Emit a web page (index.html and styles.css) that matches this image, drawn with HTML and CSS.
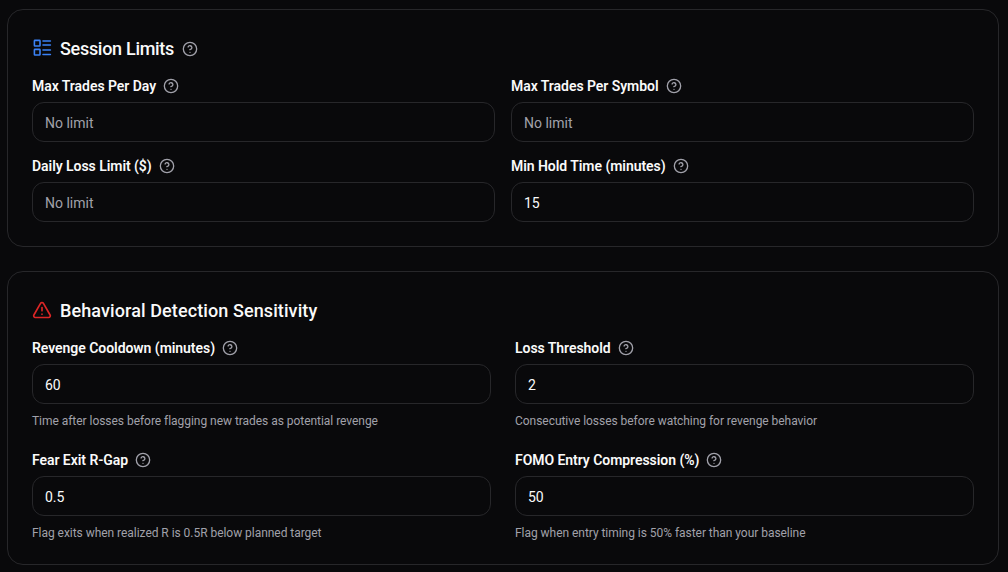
FILE: index.html
```html
<!DOCTYPE html>
<html lang="en">
<head>
  <meta charset="UTF-8" />
  <title>Trading Rules</title>
  <meta name="viewport" content="width=device-width, initial-scale=1.0" />
  <link rel="stylesheet" href="styles.css">
</head>
<body>
  <svg class="icon-defs" width="0" height="0" aria-hidden="true">
    <symbol id="help" viewBox="0 0 24 24">
      <circle cx="12" cy="12" r="10"/>
      <path d="M9.1 9a3 3 0 0 1 5.8 1c0 2-3 3-3 3"/>
      <path d="M12 17h.01"/>
    </symbol>
  </svg>

  <!-- Session limits -->
  <section class="card">
    <h2 class="card-title">
      <svg class="title-icon blue" viewBox="0 0 20 20">
        <rect x="2.4" y="2.4" width="5.6" height="5.6" rx="0.6"/>
        <rect x="2.4" y="11.4" width="5.6" height="5.6" rx="0.6"/>
        <path d="M11 3h7.4M11 7h7.4M11 12h7.4M11 16.5h7.4"/>
      </svg>
      <span>Session Limits</span>
      <svg class="help"><use href="#help"/></svg>
    </h2>
    <div class="grid grid-tight">
      <div class="field">
        <label class="label">Max Trades Per Day <svg class="help"><use href="#help"/></svg></label>
        <input class="input" type="text" placeholder="No limit" />
      </div>
      <div class="field">
        <label class="label">Max Trades Per Symbol <svg class="help"><use href="#help"/></svg></label>
        <input class="input" type="text" placeholder="No limit" />
      </div>
      <div class="field">
        <label class="label">Daily Loss Limit ($) <svg class="help"><use href="#help"/></svg></label>
        <input class="input" type="text" placeholder="No limit" />
      </div>
      <div class="field">
        <label class="label">Min Hold Time (minutes) <svg class="help"><use href="#help"/></svg></label>
        <input class="input" type="text" value="15" />
      </div>
    </div>
  </section>

  <!-- Behavioral detection -->
  <section class="card card-last">
    <h2 class="card-title card-title-long">
      <svg class="title-icon red" viewBox="0 0 24 24">
        <path d="m21.73 18-8-14a2 2 0 0 0-3.48 0l-8 14A2 2 0 0 0 4 21h16a2 2 0 0 0 1.73-3"/>
        <path d="M12 9v4"/>
        <path d="M12 17h.01"/>
      </svg>
      <span>Behavioral Detection Sensitivity</span>
    </h2>
    <div class="grid grid-wide">
      <div class="field">
        <label class="label">Revenge Cooldown (minutes) <svg class="help"><use href="#help"/></svg></label>
        <input class="input" type="text" value="60" />
        <p class="hint">Time after losses before flagging new trades as potential revenge</p>
      </div>
      <div class="field">
        <label class="label">Loss Threshold <svg class="help"><use href="#help"/></svg></label>
        <input class="input" type="text" value="2" />
        <p class="hint">Consecutive losses before watching for revenge behavior</p>
      </div>
      <div class="field">
        <label class="label">Fear Exit R-Gap <svg class="help"><use href="#help"/></svg></label>
        <input class="input" type="text" value="0.5" />
        <p class="hint">Flag exits when realized R is 0.5R below planned target</p>
      </div>
      <div class="field">
        <label class="label">FOMO Entry Compression (%) <svg class="help"><use href="#help"/></svg></label>
        <input class="input" type="text" value="50" />
        <p class="hint">Flag when entry timing is 50% faster than your baseline</p>
      </div>
    </div>
  </section>
</body>
</html>
```

FILE: styles.css
```css
* { box-sizing: border-box; margin: 0; padding: 0; }

body {
  font-family: Roboto, sans-serif;
  background-color: #09090b;
  color: #fafafa;
  padding: 9px 9px 0 7px;
  height: 572px;
  overflow: hidden;
}

.icon-defs {
  position: absolute;
}

.card {
  border: 1px solid #27272a;
  border-radius: 16px;
  padding: 24px;
  margin-bottom: 24px;
}

.card-last {
  padding-bottom: 23px;
}

.card-title {
  display: flex;
  align-items: center;
  gap: 8px;
  font-size: 18px;
  line-height: 28px;
  font-weight: 500;
  letter-spacing: -0.3px;
  margin-top: 1px;
  margin-bottom: 13px;
}

.card-title-long {
  letter-spacing: 0.1px;
}

.title-icon {
  width: 20px;
  height: 20px;
  margin-bottom: 2px;
  fill: none;
  stroke-linecap: round;
  stroke-linejoin: round;
}

.blue {
  stroke: #3b82f6;
  stroke-width: 1.6;
}

.red {
  stroke: #dc2626;
  stroke-width: 2;
}

.help {
  width: 16px;
  height: 16px;
  flex-shrink: 0;
  fill: none;
  stroke: #a1a1aa;
  stroke-width: 2;
  stroke-linecap: round;
  stroke-linejoin: round;
}

.grid {
  display: grid;
  grid-template-columns: 1fr 1fr;
}

.grid-tight { gap: 14px 16px; }
.grid-wide { gap: 21px 24px; }

.field {
  min-width: 0;
}

.label {
  display: flex;
  align-items: center;
  gap: 7px;
  font-size: 14px;
  line-height: 20px;
  font-weight: 600;
  letter-spacing: -0.05px;
  margin-bottom: 6px;
}

.input {
  display: block;
  width: 100%;
  height: 40px;
  padding: 2px 12px 0;
  background: transparent;
  border: 1px solid #27272a;
  border-radius: 12px;
  color: #fafafa;
  font-family: inherit;
  font-size: 14px;
}

.input::placeholder {
  color: #a1a1aa;
}

.hint {
  font-size: 12px;
  line-height: 16px;
  letter-spacing: -0.04px;
  color: #a1a1aa;
  margin-top: 9px;
}
```
